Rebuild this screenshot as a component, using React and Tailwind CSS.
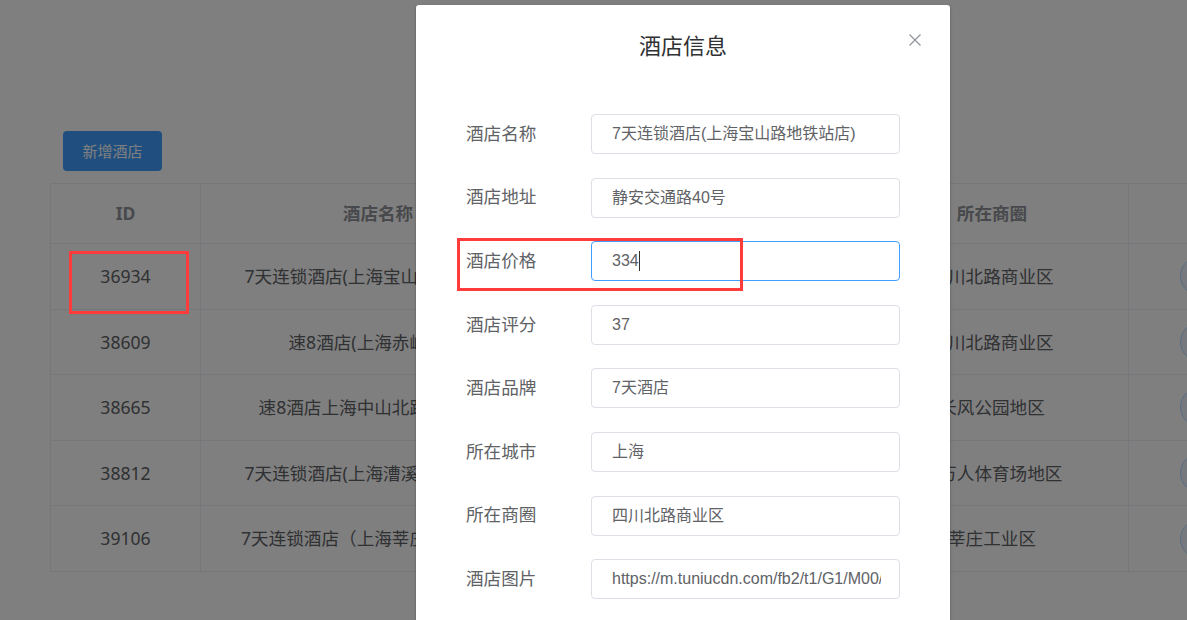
import React from 'react'

const rows = [
  { id: '36934', name: '7天连锁酒店(上海宝山路地铁站店)', addr: '静安交通路40号', area: '四川北路商业区' },
  { id: '38609', name: '速8酒店(上海赤峰路店)', addr: '广灵二路126号', area: '四川北路商业区' },
  { id: '38665', name: '速8酒店上海中山北路兰田路店', addr: '兰田路38号', area: '长风公园地区' },
  { id: '38812', name: '7天连锁酒店(上海漕溪路地铁站店)', addr: '徐汇龙华西路315弄58号', area: '八万人体育场地区' },
  { id: '39106', name: '7天连锁酒店（上海莘庄地铁站店）', addr: '七莘路299号', area: '莘庄工业区' },
]

const fields = [
  { label: '酒店名称', value: '7天连锁酒店(上海宝山路地铁站店)' },
  { label: '酒店地址', value: '静安交通路40号' },
  { label: '酒店价格', value: '334', focus: true },
  { label: '酒店评分', value: '37' },
  { label: '酒店品牌', value: '7天酒店' },
  { label: '所在城市', value: '上海' },
  { label: '所在商圈', value: '四川北路商业区' },
  { label: '酒店图片', value: 'https://m.tuniucdn.com/fb2/t1/G1/M00/3E/40/Cii9EVkyLrKIXo1vAAHgrxo_pUcAALcKQLD688AAeDH564_w200_h200_c1_t0.jpg' },
]

const cell = 'flex items-center justify-center border-r border-b border-[#ebeef5] whitespace-nowrap overflow-hidden'

export default function App() {
  return (
    <div
      className="relative w-[1187px] h-[620px] overflow-hidden bg-white"
      style={{ fontFamily: '"Noto Sans", "Noto Sans CJK SC", sans-serif' }}
    >
      {/* page behind the dialog */}
      <div className="pt-[131px]">
        <button className="ml-[63px] w-[99px] h-[40px] rounded-[4px] bg-[#409eff] text-white text-[15px]">
          新增酒店
        </button>
        <div className="ml-[50px] mt-[12px] w-[1250px] border-l border-t border-[#ebeef5] text-[17.6px] text-[#606266]">
          <div className="grid grid-cols-[150px_355px_300px_273px_172px] h-[60px] font-bold text-[#909399]">
            <div className={cell}>ID</div>
            <div className={cell}>酒店名称</div>
            <div className={cell}>酒店地址</div>
            <div className={cell}>所在商圈</div>
            <div className={cell} />
          </div>
          {rows.map((r) => (
            <div key={r.id} className="grid grid-cols-[150px_355px_300px_273px_172px] h-[65.6px]">
              <div className={cell}>{r.id}</div>
              <div className={cell}>{r.name}</div>
              <div className={cell}>{r.addr}</div>
              <div className={cell}>{r.area}</div>
              <div className="flex items-center pl-[51px] gap-3 border-r border-b border-[#ebeef5]">
                <span className="w-[40px] h-[40px] rounded-full border border-[#b3d8ff] bg-[#ecf5ff]" />
                <span className="w-[40px] h-[40px] rounded-full border border-[#fbc4c4] bg-[#fef0f0]" />
              </div>
            </div>
          ))}
        </div>
      </div>

      {/* mask */}
      <div className="absolute inset-0 bg-black/50" />

      {/* dialog */}
      <div
        className="absolute left-[416px] top-[5px] w-[534px] h-[700px] bg-white rounded-[3px] shadow-[0_1px_3px_rgba(0,0,0,0.3)]"
        style={{ fontFamily: '"Liberation Sans", "Noto Sans CJK SC", sans-serif' }}
      >
        <div className="relative pt-[29px] text-center text-[22px] leading-[26px] text-[#303133]">
          酒店信息
          <svg className="absolute left-[493px] top-[29px]" width="12" height="12" viewBox="0 0 12 12">
            <path d="M0.5 0.5 L11.5 11.5 M11.5 0.5 L0.5 11.5" stroke="#909399" strokeWidth="1.2" />
          </svg>
        </div>
        <div className="mt-[54px] flex flex-col gap-[23.6px] pl-[50px] pr-[50px]">
          {fields.map((f) => (
            <div key={f.label} className="flex items-center h-[40px]">
              <div className="w-[125px] shrink-0 whitespace-nowrap text-[17.6px] text-[#606266]">{f.label}</div>
              <div
                className={`flex-1 min-w-0 h-[40px] flex items-center pl-[20px] pr-[18px] rounded-[4px] border overflow-hidden whitespace-nowrap text-[16px] text-[#606266] ${
                  f.focus ? 'border-[#409eff]' : 'border-[#dcdfe6]'
                }`}
              >
                <span className="min-w-0 overflow-hidden">{f.value}</span>
                {f.focus && <span className="w-px h-[20px] bg-[#303133]" />}
              </div>
            </div>
          ))}
        </div>
      </div>

      {/* red annotation boxes */}
      <div className="absolute left-[69px] top-[251px] w-[120px] h-[63px] border-[3px] border-[#ff3b3b]" />
      <div className="absolute left-[457px] top-[238px] w-[286px] h-[53px] border-[3px] border-[#ff3b3b]" />
    </div>
  )
}
